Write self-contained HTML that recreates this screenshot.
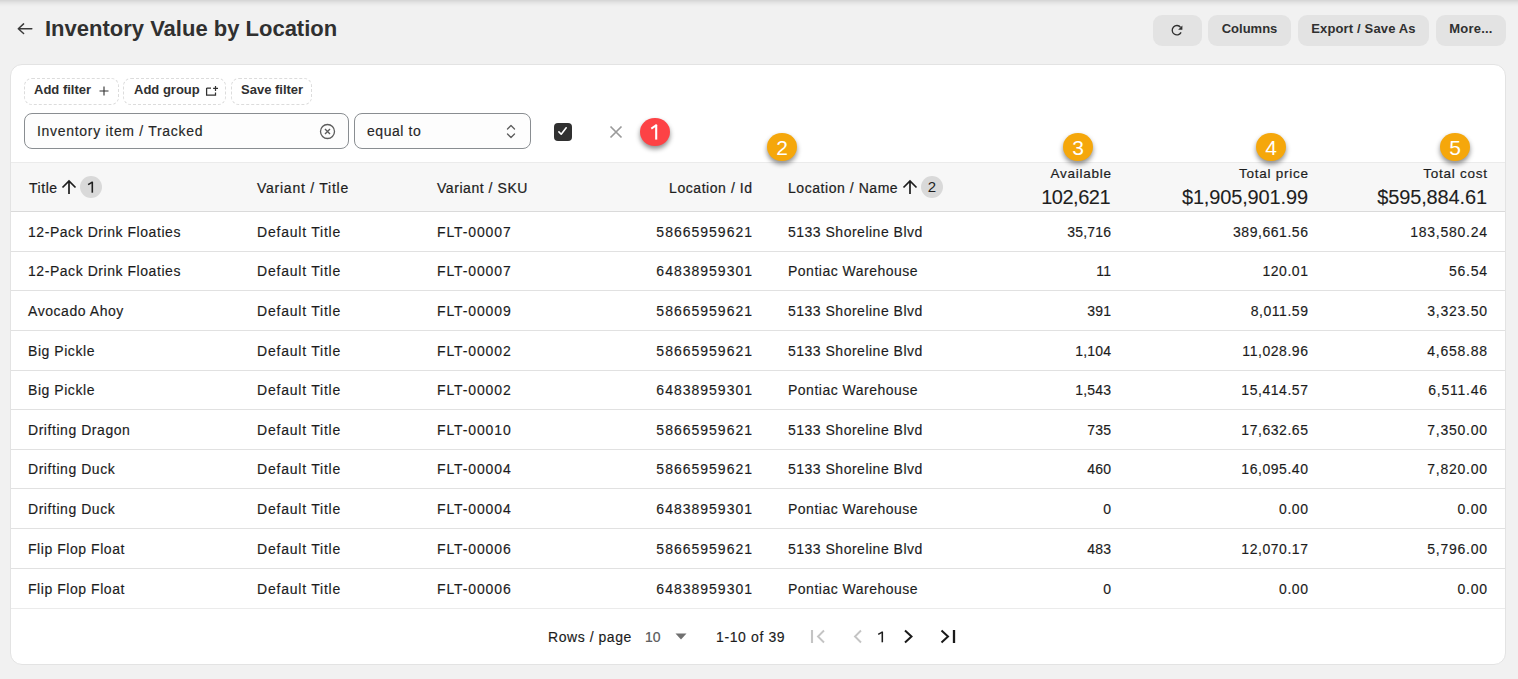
<!DOCTYPE html>
<html><head><meta charset="utf-8">
<style>
*{box-sizing:border-box;margin:0;padding:0}
:root{--ls1:0.55px;--ls2:0.78px;--ls3:0.88px;--ls4:1.0px;--ls5:0.5px;--ls6:0.2px;--ls7:0.55px;--ls8:0.75px}
html,body{width:1518px;height:679px;overflow:hidden;background:#f1f1f1;font-family:"Liberation Sans",sans-serif;color:#303030}
.a{position:absolute;white-space:nowrap}
.topshadow{position:absolute;left:0;top:0;width:1518px;height:7px;background:linear-gradient(to bottom,rgba(0,0,0,0.12),rgba(0,0,0,0.06) 35%,rgba(0,0,0,0.02) 70%,rgba(0,0,0,0))}
.title{left:45px;top:15px;font-size:22px;line-height:28px;font-weight:700;color:#303030}
.hbtn{position:absolute;top:15px;height:31px;background:#e3e3e3;border-radius:9px;font-size:13px;font-weight:700;line-height:27px;text-align:center;color:#303030}
.card{position:absolute;left:10px;top:64px;width:1496px;height:601px;background:#fff;border:1px solid #e3e3e3;border-radius:12px;overflow:hidden}
.fbtn{position:absolute;top:78px;height:27px;border:1px dashed #dcdcdc;border-radius:8px;font-size:13px;font-weight:700;line-height:22px;color:#303030}
.inp{position:absolute;top:113px;height:36px;border:1px solid #898d91;border-radius:8px;background:#fdfdfd;font-size:14px;line-height:34px;color:#262626;-webkit-text-stroke:0.15px #262626}
.thead{position:absolute;left:11px;top:162px;width:1494px;height:50px;background:#f7f7f7;border-top:1px solid #ebebeb;border-bottom:1px solid #dadada}
.row{position:absolute;left:11px;width:1494px;height:1px;background:#e3e3e3}
.c{position:absolute;font-size:14px;line-height:16px;white-space:nowrap;color:#1c1c1c;-webkit-text-stroke:0.15px #1c1c1c}
.r{text-align:right}
.hl{position:absolute;font-size:14px;line-height:16px;white-space:nowrap;color:#1e1e1e;letter-spacing:0.55px;-webkit-text-stroke:0.22px #1e1e1e}
.hl.r{margin-right:-0.55px}
.tl{font-size:13.5px!important;letter-spacing:0.75px!important;margin-right:-0.75px!important;-webkit-text-stroke:0.2px #1e1e1e!important}
.tv{font-size:20px!important;line-height:22px!important;letter-spacing:-0.15px!important;margin-right:0.15px!important;-webkit-text-stroke:0.1px #1e1e1e!important}
.sortb{display:inline-block;width:22px;height:22px;border-radius:11px;background:#d9d9d9;text-align:center;line-height:22px;font-size:15px;color:#1e1e1e}
.obadge{position:absolute;width:30px;height:28.5px;border-radius:50%;background:#f5a70b;color:#fff;font-size:21px;line-height:29px;text-align:center;box-shadow:0 3px 5px rgba(0,0,0,0.45)}
.rbadge{position:absolute;width:30px;height:28.5px;border-radius:50%;background:#fd4245;color:#fff;font-size:20px;line-height:30px;text-align:center;box-shadow:0 3px 5px rgba(0,0,0,0.45)}
</style></head><body>
<div class="topshadow"></div>

<!-- back arrow -->
<svg class="a" style="left:17px;top:22px" width="16" height="14" viewBox="0 0 16 14"><path d="M6.6 1.9L1.3 6.7L6.6 11.5M1.3 6.7H14.8" fill="none" stroke="#3a3a3a" stroke-width="1.5" stroke-linecap="round" stroke-linejoin="round"/></svg>
<div class="a title">Inventory Value by Location</div>

<div class="hbtn" style="left:1153px;width:49px">
<svg style="position:absolute;left:18px;top:9px" width="13" height="13" viewBox="0 0 13 13"><path d="M9.6 3.3A4.7 4.7 0 1 0 10.1 8.4" fill="none" stroke="#303030" stroke-width="1.35"/><path d="M7.1 5.8H11.4V1.5Z" fill="#303030"/></svg>
</div>
<div class="hbtn" style="left:1208px;width:83px">Columns</div>
<div class="hbtn" style="left:1298px;width:131px;letter-spacing:0.15px">Export / Save As</div>
<div class="hbtn" style="left:1436px;width:70px;letter-spacing:0.2px">More...</div>

<div class="card"></div>

<div class="fbtn" style="left:24px;width:95px"><span style="position:absolute;left:9px">Add filter</span>
<svg style="position:absolute;left:74px;top:7px" width="10" height="10" viewBox="0 0 10 10"><path d="M5 0.5V9.5M0.5 5H9.5" stroke="#303030" stroke-width="1.1"/></svg></div>
<div class="fbtn" style="left:123px;width:103px"><span style="position:absolute;left:10px">Add group</span>
<svg style="position:absolute;left:81px;top:6px" width="14" height="12" viewBox="0 0 14 12"><path d="M1.6 3V10.1H10.5V7.6M1.6 3H6" fill="none" stroke="#303030" stroke-width="1.25"/><path d="M10.5 0.9V5.9M8.1 3.4H13" stroke="#303030" stroke-width="1.2"/></svg></div>
<div class="fbtn" style="left:231px;width:81px"><span style="position:absolute;left:9px">Save filter</span></div>

<div class="inp" style="left:24px;width:325px"><span style="position:absolute;left:12px;letter-spacing:0.7px">Inventory item / Tracked</span>
<svg style="position:absolute;left:294px;top:9px" width="17" height="17" viewBox="0 0 17 17"><circle cx="8.5" cy="8.5" r="7" fill="none" stroke="#5c5c5c" stroke-width="1.3"/><path d="M6 6L11 11M11 6L6 11" stroke="#5c5c5c" stroke-width="1.4"/></svg></div>
<div class="inp" style="left:354px;width:177px"><span style="position:absolute;left:12px;letter-spacing:0.55px">equal to</span>
<svg style="position:absolute;left:150px;top:10px" width="12" height="15" viewBox="0 0 12 15"><path d="M2.5 5L6 1.5L9.5 5M2.5 10L6 13.5L9.5 10" fill="none" stroke="#5c5c5c" stroke-width="1.3" stroke-linecap="round" stroke-linejoin="round"/></svg></div>

<!-- checkbox -->
<div class="a" style="left:554px;top:123px;width:18px;height:18px;border-radius:4px;background:#303030">
<svg style="position:absolute;left:3px;top:3px" width="12" height="12" viewBox="0 0 12 12"><path d="M1.9 5.9L4.2 8.2L9.2 1.8" fill="none" stroke="#fff" stroke-width="1.6" stroke-linecap="round" stroke-linejoin="round"/></svg></div>
<svg class="a" style="left:609px;top:125px" width="14" height="14" viewBox="0 0 14 14"><path d="M1.5 1.5L12.5 12.5M12.5 1.5L1.5 12.5" stroke="#9a9a9a" stroke-width="1.7"/></svg>
<div class="rbadge" style="left:640px;top:117.7px"><svg style="position:absolute;left:0;top:-0.7px" width="30" height="30" viewBox="0 0 30 30"><path d="M16.2 7.8V22.6" stroke="#fff" stroke-width="2.1"/><path d="M16.8 7.9L11.3 11.6" stroke="#fff" stroke-width="1.9"/></svg></div>

<!-- table header -->
<div class="thead"></div>
<div class="hl" style="left:29px;top:180px">Title</div>
<svg class="a" style="left:61px;top:179px" width="16" height="16" viewBox="0 0 16 16"><path d="M8 15V2M1.5 8.5L8 2L14.5 8.5" fill="none" stroke="#1e1e1e" stroke-width="1.7"/></svg>
<div class="a sortb" style="left:80px;top:176px"><svg style="position:absolute;left:0;top:0" width="22" height="22" viewBox="0 0 22 22"><path d="M12.3 5.9V16.7" stroke="#1e1e1e" stroke-width="1.6"/><path d="M12.7 6L8.1 8.7" stroke="#1e1e1e" stroke-width="1.5"/></svg></div>
<div class="hl" style="left:257px;top:180px;letter-spacing:0.75px">Variant / Title</div>
<div class="hl" style="left:437px;top:180px">Variant / SKU</div>
<div class="hl r" style="right:766px;top:180px">Location / Id</div>
<div class="hl" style="left:788px;top:180px">Location / Name</div>
<svg class="a" style="left:902px;top:179px" width="16" height="16" viewBox="0 0 16 16"><path d="M8 15V2M1.5 8.5L8 2L14.5 8.5" fill="none" stroke="#1e1e1e" stroke-width="1.7"/></svg>
<div class="a sortb" style="left:921px;top:176px">2</div>

<div class="hl r tl" style="right:407px;top:166px">Available</div>
<div class="hl r tv" style="right:407px;top:186px;letter-spacing:-0.5px!important;margin-right:1px!important">102,621</div>
<div class="hl r tl" style="right:210px;top:166px">Total price</div>
<div class="hl r tv" style="right:210px;top:186px">$1,905,901.99</div>
<div class="hl r tl" style="right:31px;top:166px">Total cost</div>
<div class="hl r tv" style="right:31px;top:186px">$595,884.61</div>

<div class="obadge" style="left:767px;top:132.7px">2</div>
<div class="obadge" style="left:1063px;top:132.7px">3</div>
<div class="obadge" style="left:1256px;top:132.7px">4</div>
<div class="obadge" style="left:1440px;top:132.7px">5</div>

<div id="rows">
<div class="row" style="top:251px;background:#e1e1e1"></div>
<div class="row" style="top:290px;background:#e1e1e1"></div>
<div class="row" style="top:330px;background:#e1e1e1"></div>
<div class="row" style="top:370px;background:#e1e1e1"></div>
<div class="row" style="top:409px;background:#e1e1e1"></div>
<div class="row" style="top:449px;background:#e1e1e1"></div>
<div class="row" style="top:488px;background:#e1e1e1"></div>
<div class="row" style="top:528px;background:#e1e1e1"></div>
<div class="row" style="top:568px;background:#e1e1e1"></div>
<div class="row" style="top:608px;background:#ebebeb"></div>
<div class="c" style="left:28px;top:224.00px;letter-spacing:var(--ls1)">12-Pack Drink Floaties</div>
<div class="c" style="left:257px;top:224.00px;letter-spacing:var(--ls2)">Default Title</div>
<div class="c" style="left:437px;top:224.00px;letter-spacing:var(--ls3)">FLT-00007</div>
<div class="c r" style="right:766px;margin-right:calc(-1*var(--ls4));top:224.00px;letter-spacing:var(--ls4)">58665959621</div>
<div class="c" style="left:788px;top:224.00px;letter-spacing:var(--ls5)">5133 Shoreline Blvd</div>
<div class="c r" style="right:407px;margin-right:calc(-1*var(--ls6));top:224.00px;letter-spacing:var(--ls6)">35,716</div>
<div class="c r" style="right:210px;margin-right:calc(-1*var(--ls7));top:224.00px;letter-spacing:var(--ls7)">389,661.56</div>
<div class="c r" style="right:31px;margin-right:calc(-1*var(--ls8));top:224.00px;letter-spacing:var(--ls8)">183,580.24</div>
<div class="c" style="left:28px;top:263.00px;letter-spacing:var(--ls1)">12-Pack Drink Floaties</div>
<div class="c" style="left:257px;top:263.00px;letter-spacing:var(--ls2)">Default Title</div>
<div class="c" style="left:437px;top:263.00px;letter-spacing:var(--ls3)">FLT-00007</div>
<div class="c r" style="right:766px;margin-right:calc(-1*var(--ls4));top:263.00px;letter-spacing:var(--ls4)">64838959301</div>
<div class="c" style="left:788px;top:263.00px;letter-spacing:var(--ls5)">Pontiac Warehouse</div>
<div class="c r" style="right:407px;margin-right:calc(-1*var(--ls6));top:263.00px;letter-spacing:var(--ls6)">11</div>
<div class="c r" style="right:210px;margin-right:calc(-1*var(--ls7));top:263.00px;letter-spacing:var(--ls7)">120.01</div>
<div class="c r" style="right:31px;margin-right:calc(-1*var(--ls8));top:263.00px;letter-spacing:var(--ls8)">56.54</div>
<div class="c" style="left:28px;top:303.00px;letter-spacing:var(--ls1)">Avocado Ahoy</div>
<div class="c" style="left:257px;top:303.00px;letter-spacing:var(--ls2)">Default Title</div>
<div class="c" style="left:437px;top:303.00px;letter-spacing:var(--ls3)">FLT-00009</div>
<div class="c r" style="right:766px;margin-right:calc(-1*var(--ls4));top:303.00px;letter-spacing:var(--ls4)">58665959621</div>
<div class="c" style="left:788px;top:303.00px;letter-spacing:var(--ls5)">5133 Shoreline Blvd</div>
<div class="c r" style="right:407px;margin-right:calc(-1*var(--ls6));top:303.00px;letter-spacing:var(--ls6)">391</div>
<div class="c r" style="right:210px;margin-right:calc(-1*var(--ls7));top:303.00px;letter-spacing:var(--ls7)">8,011.59</div>
<div class="c r" style="right:31px;margin-right:calc(-1*var(--ls8));top:303.00px;letter-spacing:var(--ls8)">3,323.50</div>
<div class="c" style="left:28px;top:343.00px;letter-spacing:var(--ls1)">Big Pickle</div>
<div class="c" style="left:257px;top:343.00px;letter-spacing:var(--ls2)">Default Title</div>
<div class="c" style="left:437px;top:343.00px;letter-spacing:var(--ls3)">FLT-00002</div>
<div class="c r" style="right:766px;margin-right:calc(-1*var(--ls4));top:343.00px;letter-spacing:var(--ls4)">58665959621</div>
<div class="c" style="left:788px;top:343.00px;letter-spacing:var(--ls5)">5133 Shoreline Blvd</div>
<div class="c r" style="right:407px;margin-right:calc(-1*var(--ls6));top:343.00px;letter-spacing:var(--ls6)">1,104</div>
<div class="c r" style="right:210px;margin-right:calc(-1*var(--ls7));top:343.00px;letter-spacing:var(--ls7)">11,028.96</div>
<div class="c r" style="right:31px;margin-right:calc(-1*var(--ls8));top:343.00px;letter-spacing:var(--ls8)">4,658.88</div>
<div class="c" style="left:28px;top:382.00px;letter-spacing:var(--ls1)">Big Pickle</div>
<div class="c" style="left:257px;top:382.00px;letter-spacing:var(--ls2)">Default Title</div>
<div class="c" style="left:437px;top:382.00px;letter-spacing:var(--ls3)">FLT-00002</div>
<div class="c r" style="right:766px;margin-right:calc(-1*var(--ls4));top:382.00px;letter-spacing:var(--ls4)">64838959301</div>
<div class="c" style="left:788px;top:382.00px;letter-spacing:var(--ls5)">Pontiac Warehouse</div>
<div class="c r" style="right:407px;margin-right:calc(-1*var(--ls6));top:382.00px;letter-spacing:var(--ls6)">1,543</div>
<div class="c r" style="right:210px;margin-right:calc(-1*var(--ls7));top:382.00px;letter-spacing:var(--ls7)">15,414.57</div>
<div class="c r" style="right:31px;margin-right:calc(-1*var(--ls8));top:382.00px;letter-spacing:var(--ls8)">6,511.46</div>
<div class="c" style="left:28px;top:422.00px;letter-spacing:var(--ls1)">Drifting Dragon</div>
<div class="c" style="left:257px;top:422.00px;letter-spacing:var(--ls2)">Default Title</div>
<div class="c" style="left:437px;top:422.00px;letter-spacing:var(--ls3)">FLT-00010</div>
<div class="c r" style="right:766px;margin-right:calc(-1*var(--ls4));top:422.00px;letter-spacing:var(--ls4)">58665959621</div>
<div class="c" style="left:788px;top:422.00px;letter-spacing:var(--ls5)">5133 Shoreline Blvd</div>
<div class="c r" style="right:407px;margin-right:calc(-1*var(--ls6));top:422.00px;letter-spacing:var(--ls6)">735</div>
<div class="c r" style="right:210px;margin-right:calc(-1*var(--ls7));top:422.00px;letter-spacing:var(--ls7)">17,632.65</div>
<div class="c r" style="right:31px;margin-right:calc(-1*var(--ls8));top:422.00px;letter-spacing:var(--ls8)">7,350.00</div>
<div class="c" style="left:28px;top:461.00px;letter-spacing:var(--ls1)">Drifting Duck</div>
<div class="c" style="left:257px;top:461.00px;letter-spacing:var(--ls2)">Default Title</div>
<div class="c" style="left:437px;top:461.00px;letter-spacing:var(--ls3)">FLT-00004</div>
<div class="c r" style="right:766px;margin-right:calc(-1*var(--ls4));top:461.00px;letter-spacing:var(--ls4)">58665959621</div>
<div class="c" style="left:788px;top:461.00px;letter-spacing:var(--ls5)">5133 Shoreline Blvd</div>
<div class="c r" style="right:407px;margin-right:calc(-1*var(--ls6));top:461.00px;letter-spacing:var(--ls6)">460</div>
<div class="c r" style="right:210px;margin-right:calc(-1*var(--ls7));top:461.00px;letter-spacing:var(--ls7)">16,095.40</div>
<div class="c r" style="right:31px;margin-right:calc(-1*var(--ls8));top:461.00px;letter-spacing:var(--ls8)">7,820.00</div>
<div class="c" style="left:28px;top:501.00px;letter-spacing:var(--ls1)">Drifting Duck</div>
<div class="c" style="left:257px;top:501.00px;letter-spacing:var(--ls2)">Default Title</div>
<div class="c" style="left:437px;top:501.00px;letter-spacing:var(--ls3)">FLT-00004</div>
<div class="c r" style="right:766px;margin-right:calc(-1*var(--ls4));top:501.00px;letter-spacing:var(--ls4)">64838959301</div>
<div class="c" style="left:788px;top:501.00px;letter-spacing:var(--ls5)">Pontiac Warehouse</div>
<div class="c r" style="right:407px;margin-right:calc(-1*var(--ls6));top:501.00px;letter-spacing:var(--ls6)">0</div>
<div class="c r" style="right:210px;margin-right:calc(-1*var(--ls7));top:501.00px;letter-spacing:var(--ls7)">0.00</div>
<div class="c r" style="right:31px;margin-right:calc(-1*var(--ls8));top:501.00px;letter-spacing:var(--ls8)">0.00</div>
<div class="c" style="left:28px;top:541.00px;letter-spacing:var(--ls1)">Flip Flop Float</div>
<div class="c" style="left:257px;top:541.00px;letter-spacing:var(--ls2)">Default Title</div>
<div class="c" style="left:437px;top:541.00px;letter-spacing:var(--ls3)">FLT-00006</div>
<div class="c r" style="right:766px;margin-right:calc(-1*var(--ls4));top:541.00px;letter-spacing:var(--ls4)">58665959621</div>
<div class="c" style="left:788px;top:541.00px;letter-spacing:var(--ls5)">5133 Shoreline Blvd</div>
<div class="c r" style="right:407px;margin-right:calc(-1*var(--ls6));top:541.00px;letter-spacing:var(--ls6)">483</div>
<div class="c r" style="right:210px;margin-right:calc(-1*var(--ls7));top:541.00px;letter-spacing:var(--ls7)">12,070.17</div>
<div class="c r" style="right:31px;margin-right:calc(-1*var(--ls8));top:541.00px;letter-spacing:var(--ls8)">5,796.00</div>
<div class="c" style="left:28px;top:581.00px;letter-spacing:var(--ls1)">Flip Flop Float</div>
<div class="c" style="left:257px;top:581.00px;letter-spacing:var(--ls2)">Default Title</div>
<div class="c" style="left:437px;top:581.00px;letter-spacing:var(--ls3)">FLT-00006</div>
<div class="c r" style="right:766px;margin-right:calc(-1*var(--ls4));top:581.00px;letter-spacing:var(--ls4)">64838959301</div>
<div class="c" style="left:788px;top:581.00px;letter-spacing:var(--ls5)">Pontiac Warehouse</div>
<div class="c r" style="right:407px;margin-right:calc(-1*var(--ls6));top:581.00px;letter-spacing:var(--ls6)">0</div>
<div class="c r" style="right:210px;margin-right:calc(-1*var(--ls7));top:581.00px;letter-spacing:var(--ls7)">0.00</div>
<div class="c r" style="right:31px;margin-right:calc(-1*var(--ls8));top:581.00px;letter-spacing:var(--ls8)">0.00</div>
</div><!--/rows-->

<!-- pagination -->
<div class="c" style="left:548px;top:629px;letter-spacing:0.55px">Rows / page</div>
<div class="c" style="left:645px;top:629px;color:#616161">10</div>
<svg class="a" style="left:675px;top:633px" width="12" height="7" viewBox="0 0 12 7"><path d="M0.5 0.5H11.5L6 6.5Z" fill="#707070"/></svg>
<div class="c" style="left:716px;top:629px;letter-spacing:0.62px">1-10 of 39</div>
<svg class="a" style="left:810px;top:629px" width="16" height="15" viewBox="0 0 16 15"><path d="M2 1V14" stroke="#c4c4c4" stroke-width="2.1"/><path d="M14 1.5L8 7.5L14 13.5" fill="none" stroke="#c4c4c4" stroke-width="1.9"/></svg>
<svg class="a" style="left:852px;top:629px" width="11" height="15" viewBox="0 0 11 15"><path d="M9 1.5L3 7.5L9 13.5" fill="none" stroke="#c4c4c4" stroke-width="1.9"/></svg>
<svg class="a" style="left:876px;top:630px" width="10" height="14" viewBox="0 0 10 14"><path d="M6.3 1.8V12.3" stroke="#1c1c1c" stroke-width="1.55"/><path d="M6.7 1.9L2.2 4.4" stroke="#1c1c1c" stroke-width="1.45"/></svg>
<svg class="a" style="left:903px;top:629px" width="11" height="15" viewBox="0 0 11 15"><path d="M2 1.5L8.5 7.5L2 13.5" fill="none" stroke="#1a1a1a" stroke-width="2"/></svg>
<svg class="a" style="left:940px;top:629px" width="16" height="15" viewBox="0 0 16 15"><path d="M1.5 1.5L8 7.5L1.5 13.5" fill="none" stroke="#1a1a1a" stroke-width="2"/><path d="M14 1V14" stroke="#1a1a1a" stroke-width="2.3"/></svg>
</body></html>
